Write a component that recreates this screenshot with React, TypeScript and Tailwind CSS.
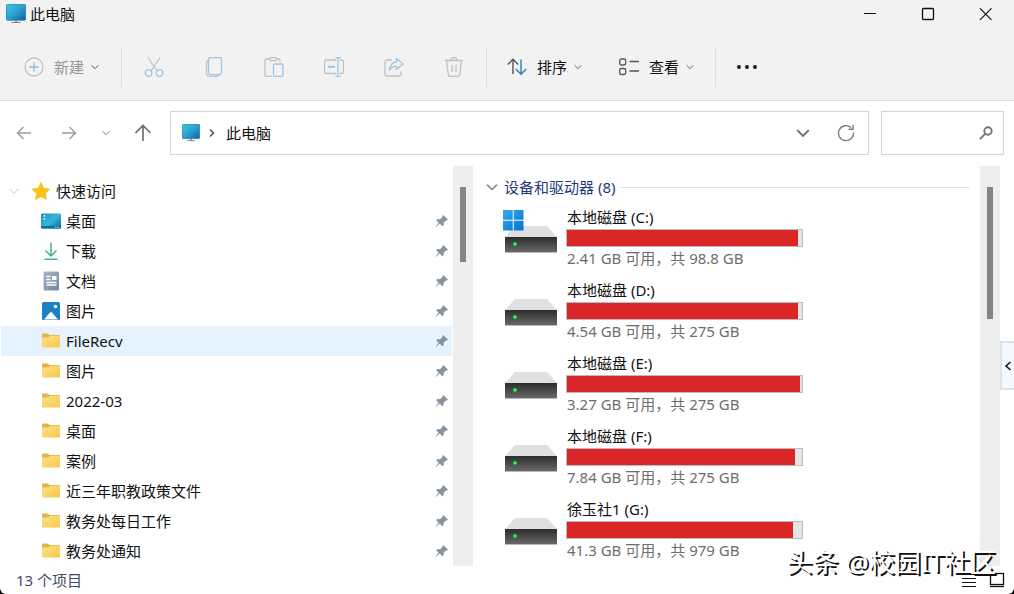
import { useState } from "react";
import type { ReactNode } from "react";

// ─────────────────────────────────────────────────────────────────────────────
// Explorateur de fichiers — fenêtre « 此电脑 »
// ─────────────────────────────────────────────────────────────────────────────

type IconKind = "desktop" | "download" | "document" | "picture" | "folder";

interface QuickItem {
  id:   string;
  nom:  string;
  icon: IconKind;
}

interface Drive {
  nom:     string;
  info:    string;
  used:    number;
  systeme?: boolean;
}

const QUICK_ITEMS: QuickItem[] = [
  { id: "desktop",   nom: "桌面",               icon: "desktop" },
  { id: "downloads", nom: "下载",               icon: "download" },
  { id: "documents", nom: "文档",               icon: "document" },
  { id: "pictures",  nom: "图片",               icon: "picture" },
  { id: "filerecv",  nom: "FileRecv",           icon: "folder" },
  { id: "images",    nom: "图片",               icon: "folder" },
  { id: "2022-03",   nom: "2022-03",            icon: "folder" },
  { id: "bureau",    nom: "桌面",               icon: "folder" },
  { id: "cases",     nom: "案例",               icon: "folder" },
  { id: "policy",    nom: "近三年职教政策文件", icon: "folder" },
  { id: "daily",     nom: "教务处每日工作",     icon: "folder" },
  { id: "notices",   nom: "教务处通知",         icon: "folder" },
];

const DRIVES: Drive[] = [
  { nom: "本地磁盘 (C:)", info: "2.41 GB 可用，共 98.8 GB", used: 98.5, systeme: true },
  { nom: "本地磁盘 (D:)", info: "4.54 GB 可用，共 275 GB",  used: 98.5 },
  { nom: "本地磁盘 (E:)", info: "3.27 GB 可用，共 275 GB",  used: 99.2 },
  { nom: "本地磁盘 (F:)", info: "7.84 GB 可用，共 275 GB",  used: 97.1 },
  { nom: "徐玉社1 (G:)",  info: "41.3 GB 可用，共 979 GB",  used: 96.2 },
];

/* ── Icônes ──────────────────────────────────────────────────────────────── */

function Monitor({ className }: { className: string }) {
  return (
    <svg viewBox="0 0 20 20" className={className} aria-hidden="true">
      <defs>
        <linearGradient id="screen" x1="0" y1="0" x2="1" y2="1">
          <stop offset="0" stopColor="#35d0e4" />
          <stop offset="0.5" stopColor="#2a9fcf" />
          <stop offset="1" stopColor="#14619f" />
        </linearGradient>
      </defs>
      <path d="M9 16h2v3H9z" fill="#8f9aa3" />
      <path d="M5.500 18.500h9" stroke="#7d868c" strokeWidth="1" />
      <rect x="0.400" y="0.400" width="19.200" height="15.800" rx="1" fill="url(#screen)" stroke="#1f78a6" strokeWidth="0.800" />
    </svg>
  );
}

function Chevron({ className }: { className: string }) {
  return (
    <svg viewBox="0 0 8 8" className={className} fill="none" stroke="currentColor" aria-hidden="true">
      <path d="M0.700 2.400 4 5.700l3.300-3.300" />
    </svg>
  );
}

function ToolIcon({ children }: { children: ReactNode }) {
  return (
    <svg viewBox="0 0 20 20" className="size-5" fill="none" stroke="#bfc2c5" strokeWidth="1.300" strokeLinejoin="round" aria-hidden="true">
      {children}
    </svg>
  );
}

function ItemIcon({ kind }: { kind: IconKind }) {
  if (kind === "desktop") {
    return (
      <svg viewBox="0 0 20 20" className="size-5" aria-hidden="true">
        <defs>
          <linearGradient id="desk" x1="0" y1="0" x2="1" y2="1">
            <stop offset="0" stopColor="#1b8fc0" />
            <stop offset="0.5" stopColor="#35b5dc" />
            <stop offset="1" stopColor="#0e6699" />
          </linearGradient>
        </defs>
        <rect x="0" y="2.500" width="20" height="15" rx="1" fill="url(#desk)" />
        <path d="M2.500 4h1.800v1.800H2.500zM2.500 7h1.800v1.800H2.500z" fill="#c8f0fb" />
        <path d="M0 15h20v1.500a1 1 0 0 1-1 1H1a1 1 0 0 1-1-1z" fill="#0d6da2" />
        <path d="M14 16.200h1.500m1 0h1.500" stroke="#9fdcf0" />
      </svg>
    );
  }
  if (kind === "download") {
    return (
      <svg viewBox="0 0 20 20" className="size-5" fill="none" stroke="#42b392" strokeWidth="1.500" aria-hidden="true">
        <path d="M10 1.500v13M4.500 9.500 10 15l5.500-5.500M3.500 18.300h13" />
      </svg>
    );
  }
  if (kind === "document") {
    return (
      <svg viewBox="0 0 20 20" className="size-5" aria-hidden="true">
        <defs>
          <linearGradient id="doc" x1="0" y1="0" x2="1" y2="1">
            <stop offset="0" stopColor="#a7b6ca" />
            <stop offset="1" stopColor="#72859f" />
          </linearGradient>
        </defs>
        <rect x="2.500" y="0.500" width="15.500" height="19" rx="1.500" fill="url(#doc)" />
        <path d="M5.500 5.500h4M5.500 8.500h4M5.500 11.500h10M5.500 14h10" stroke="#fff" strokeWidth="1.300" />
        <path d="M11 5h4.500v4H11z" fill="#fff" />
      </svg>
    );
  }
  if (kind === "picture") {
    return (
      <svg viewBox="0 0 20 20" className="size-5" aria-hidden="true">
        <rect x="1" y="1" width="18" height="18" rx="1.500" fill="#1e80c4" />
        <path d="M3 18.500 9 11.500q1-1 2 0l6 7z" fill="#fff" />
        <circle cx="14.500" cy="5.500" r="1.700" fill="#fff" />
      </svg>
    );
  }
  return (
    <svg viewBox="0 0 20 20" className="size-5" aria-hidden="true">
      <defs>
        <linearGradient id="folder" x1="0" y1="0" x2="1" y2="1">
          <stop offset="0" stopColor="#fde28c" />
          <stop offset="1" stopColor="#f7c74b" />
        </linearGradient>
      </defs>
      <path d="M1 3.500a1 1 0 0 1 1-1h5l1.500 1.500H18a1 1 0 0 1 1 1V8H1z" fill="#e3b548" />
      <path d="M1 6.500h6.500L9.500 4.700H18a1 1 0 0 1 1 1v9.800a1 1 0 0 1-1 1H2a1 1 0 0 1-1-1z" fill="url(#folder)" />
    </svg>
  );
}

function Pin() {
  return (
    <svg viewBox="0 0 14 14" className="size-3.5" aria-hidden="true">
      <path d="M8.300 1 13 5.700l-1.100.9-.8-.2-2.500 2.300.1 2.500-1.400 1L4.700 9.500 1 12.700l-.4-.3 3-3.700L1.200 6.200l1.200-1.100 2.700.1 2.500-2.400-.2-.9z" fill="#89939d" />
    </svg>
  );
}

function DriveIcon({ systeme }: { systeme?: boolean }) {
  return (
    <svg viewBox="0 0 54 46" className="mt-px h-[46px] w-[54px] shrink-0" aria-hidden="true">
      <defs>
        <linearGradient id="front" x1="0" y1="0" x2="0" y2="1">
          <stop offset="0" stopColor="#2c2c2c" />
          <stop offset="1" stopColor="#686868" />
        </linearGradient>
        <linearGradient id="win" x1="0" y1="0" x2="1" y2="1">
          <stop offset="0" stopColor="#35a9ec" />
          <stop offset="1" stopColor="#0873cc" />
        </linearGradient>
      </defs>
      <path d="M12 18h32l10 11H2z" fill="#dfe0e2" />
      <rect x="2" y="29" width="52" height="15" fill="url(#front)" />
      <path d="M2 44.500h52" stroke="#b9b9b9" />
      <circle cx="12" cy="36" r="2.500" fill="#1f8a2c" />
      <circle cx="12" cy="36" r="1.500" fill="#4dfa5c" />
      {systeme && (
        <path d="M0 2h9.700v9.700H0zM10.700 2h9.800v9.700h-9.800zM0 12.700h9.700v9.800H0zM10.700 12.700h9.800v9.800h-9.800z" fill="url(#win)" />
      )}
    </svg>
  );
}

/* ── Barre de titre ──────────────────────────────────────────────────────── */

function TitleBar() {
  return (
    <div className="flex h-7 items-center justify-between pr-[21px] pl-1.5">
      <div className="flex items-center gap-1">
        <Monitor className="size-5" />
        <h1>此电脑</h1>
      </div>
      <div className="flex gap-11">
        <button type="button" aria-label="最小化">
          <svg viewBox="0 0 14 14" className="size-3.5" stroke="#111" aria-hidden="true">
            <path d="M1 6.500h12" />
          </svg>
        </button>
        <button type="button" aria-label="最大化">
          <svg viewBox="0 0 14 14" className="size-3.5" fill="none" stroke="#111" strokeWidth="1.300" aria-hidden="true">
            <rect x="1.500" y="1.500" width="11" height="11" rx="1" />
          </svg>
        </button>
        <button type="button" aria-label="关闭">
          <svg viewBox="0 0 14 14" className="size-3.5" stroke="#111" strokeWidth="1.200" aria-hidden="true">
            <path d="m1 1.300 11.500 11.500M12.500 1.300 1 12.800" />
          </svg>
        </button>
      </div>
    </div>
  );
}

/* ── Barre de commandes ──────────────────────────────────────────────────── */

function Separator() {
  return <div className="h-10 w-px bg-[#dedede]" />;
}

function Toolbar() {
  return (
    <div className="flex h-[73px] items-center border-b border-[#dcdcdc] pt-1.5 pl-6">
      <button type="button" className="flex items-center gap-2.5 pr-[21px] text-[#979797]">
        <ToolIcon>
          <circle cx="10" cy="10" r="9" />
          <path d="M10 5.500v9M5.500 10h9" stroke="#8fb9dc" />
        </ToolIcon>
        <span>新建</span>
        <Chevron className="-ml-1 size-2.5 p-px text-[#555]" />
      </button>
      <Separator />
      <div className="flex gap-10 px-[22px]">
        <button type="button" aria-label="剪切">
          <ToolIcon>
            <path d="M4 0.500 13 14M16 0.500 7 14" />
            <circle cx="4.500" cy="16" r="3.300" stroke="#9cc6e6" />
            <circle cx="15.500" cy="16" r="3.300" stroke="#9cc6e6" />
          </ToolIcon>
        </button>
        <button type="button" aria-label="复制">
          <ToolIcon>
            <path d="M4.500 3.500q-2 .5-2 2.500v10q0 3.500 3.500 3.500h6q2 0 2.500-1.800" />
            <rect x="4.500" y="0.600" width="13" height="17" rx="1.800" stroke="#9cc6e6" />
          </ToolIcon>
        </button>
        <button type="button" aria-label="粘贴">
          <ToolIcon>
            <path d="M6 2H2.500Q1 2 1 3.500v14.500q0 1.500 1.500 1.500H8M12 2h2.500Q16 2 16 3.500V5" />
            <rect x="5.500" y="0.600" width="7" height="3" rx="1.300" />
            <rect x="9.500" y="7" width="9.500" height="12.500" rx="1.200" stroke="#9cc6e6" />
          </ToolIcon>
        </button>
        <button type="button" aria-label="重命名">
          <ToolIcon>
            <path d="M12 3H2.500Q.6 3 .6 5v9.500q0 2 1.900 2H12M16 3h1.500q2 0 2 2v9.500q0 2-2 2H16" />
            <path d="M4 9.800h7" stroke="#9cc6e6" strokeWidth="2" />
            <path d="M14 .6v18.800M11.500.6h5M11.500 19.400h5" stroke="#9cc6e6" />
          </ToolIcon>
        </button>
        <button type="button" aria-label="共享">
          <ToolIcon>
            <path d="M8 3H3Q1 3 1 5v12q0 2 2 2h12q2 0 2-2v-2.500" />
            <path d="M12.500 1.500 19 7l-6.500 5.500V9.500Q8 9 5.500 13.500 6 5.500 12.500 4.800z" stroke="#9cc6e6" />
          </ToolIcon>
        </button>
        <button type="button" aria-label="删除">
          <ToolIcon>
            <path d="M1 3.500h18M7 3.500Q7 .6 10 .6t3 2.900M2.500 3.500l1.700 14q.3 2 2 2h7.600q1.700 0 2-2l1.700-14M8 8v7M12 8v7" />
          </ToolIcon>
        </button>
      </div>
      <Separator />
      <button type="button" className="flex items-center gap-2.5 pr-9 pl-5">
        <svg viewBox="0 0 20 20" className="size-5" fill="none" strokeWidth="1.400" aria-hidden="true">
          <path d="M6 17V2.500M.8 7.500 6 2.300l5.200 5.200" stroke="#555" />
          <path d="M14 2.500V17M8.800 12l5.200 5.200 5.200-5.200" stroke="#2b7eb8" />
        </svg>
        <span>排序</span>
        <Chevron className="-ml-1 size-2.5 p-px text-[#666]" />
      </button>
      <button type="button" className="flex items-center gap-2.5 pr-5">
        <svg viewBox="0 0 20 20" className="size-5" fill="none" stroke="#555" strokeWidth="1.300" aria-hidden="true">
          <rect x=".7" y="2" width="6" height="6" rx="1.800" />
          <rect x=".7" y="11.500" width="6" height="6" rx="1.800" />
          <path d="M10.500 4.500H20M10.500 14H20" />
        </svg>
        <span>查看</span>
        <Chevron className="-ml-1 size-2.5 p-px text-[#666]" />
      </button>
      <Separator />
      <button type="button" aria-label="更多" className="ml-5">
        <svg viewBox="0 0 22 6" className="h-1.5 w-[22px]" fill="#111" aria-hidden="true">
          <circle cx="3" cy="3" r="1.900" />
          <circle cx="11" cy="3" r="1.900" />
          <circle cx="19" cy="3" r="1.900" />
        </svg>
      </button>
    </div>
  );
}

/* ── Navigation et adresse ───────────────────────────────────────────────── */

function AddressRow() {
  const [search, setSearch] = useState("");

  return (
    <div className="flex items-center gap-3 px-2.5 pt-2.5 pb-[11px]">
      <div className="flex w-[148px] shrink-0 items-center justify-between pr-1.5 pl-1.5">
        <button type="button" aria-label="后退">
          <svg viewBox="0 0 16 16" className="size-4" fill="none" stroke="#9a9a9a" strokeWidth="1.300" aria-hidden="true">
            <path d="M15 8H1.500M7.500 2 1.500 8l6 6" />
          </svg>
        </button>
        <button type="button" aria-label="前进" className="ml-1.5">
          <svg viewBox="0 0 16 16" className="size-4" fill="none" stroke="#9a9a9a" strokeWidth="1.300" aria-hidden="true">
            <path d="M1 8h13.500M8.500 2l6 6-6 6" />
          </svg>
        </button>
        <button type="button" aria-label="最近浏览的位置">
          <Chevron className="size-2.5 p-px text-[#777]" />
        </button>
        <button type="button" aria-label="上移">
          <svg viewBox="0 0 18 18" className="size-[18px]" fill="none" stroke="#6a6a6a" strokeWidth="1.600" aria-hidden="true">
            <path d="M9 17V1.500M1.500 9 9 1.500 16.500 9" />
          </svg>
        </button>
      </div>
      <div className="flex h-11 flex-1 items-center border border-[#d4d4d4] pr-[13px] pl-[11px]">
        <Monitor className="size-[18px]" />
        <svg viewBox="0 0 8 10" className="mr-2.5 ml-2 h-2.5 w-2" fill="none" stroke="#555" strokeWidth="1.600" aria-hidden="true">
          <path d="m2 1.500 3.500 3.500L2 8.500" />
        </svg>
        <button type="button">此电脑</button>
        <button type="button" aria-label="展开" className="mr-[27px] ml-auto">
          <Chevron className="size-3.5 text-[#6b6b6b]" />
        </button>
        <button type="button" aria-label="刷新">
          <svg viewBox="0 0 18 18" className="size-[18px]" fill="none" stroke="#7b7b7b" strokeWidth="1.400" aria-hidden="true">
            <path d="M16.500 8.500A7.500 7.500 0 1 1 14 3.500M16 .8v4.400h-4.500" />
          </svg>
        </button>
      </div>
      <label className="flex h-11 w-[123px] items-center border border-[#d4d4d4] pr-2.5">
        <input
          type="search"
          aria-label="搜索"
          value={search}
          onChange={(e) => setSearch(e.target.value)}
          className="w-full min-w-0 flex-1 pl-2 outline-none"
        />
        <svg viewBox="0 0 14 14" className="size-3.5 shrink-0" fill="none" stroke="#737373" strokeWidth="1.900" aria-hidden="true">
          <circle cx="9" cy="5" r="3.700" />
          <path d="M6.200 7.800.8 13.200" />
        </svg>
      </label>
    </div>
  );
}

/* ── Volet gauche ────────────────────────────────────────────────────────── */

function Sidebar() {
  const [selected, setSelected] = useState("filerecv");

  return (
    <nav className="w-[453px] shrink-0 px-px pt-2.5">
      <button type="button" className="flex h-[30px] items-center pl-2">
        <Chevron className="mr-3 size-2.5 text-[#dcdcdc]" />
        <svg viewBox="0 0 20 20" className="mr-[5px] size-5" fill="#fcc419" stroke="#f5b50a" strokeWidth="0.700" aria-hidden="true">
          <path d="m10 1.500 2.700 5.800 6.100.8-4.500 4.300 1.200 6.100-5.500-3-5.500 3 1.200-6.100L1.200 8.100l6.100-.8z" />
        </svg>
        <span>快速访问</span>
      </button>
      <ul>
        {QUICK_ITEMS.map((item) => (
          <li key={item.id}>
            <button
              type="button"
              onClick={() => setSelected(item.id)}
              className={`flex h-[30px] w-full items-center gap-1 pr-[3px] pl-10 text-left ${
                item.id === selected ? "bg-[#e5f3fe]" : ""
              }`}
            >
              <ItemIcon kind={item.icon} />
              <span className="flex-1 pl-px">{item.nom}</span>
              <Pin />
            </button>
          </li>
        ))}
      </ul>
    </nav>
  );
}

/* ── Volet principal ─────────────────────────────────────────────────────── */

function DriveList() {
  return (
    <section className="min-w-0 flex-1 pt-[11px] pr-2.5 pl-[13px]">
      <div className="flex items-center gap-1.5">
        <button type="button" className="flex items-center gap-1.5 text-[#1e3a7b]">
          <Chevron className="size-3 text-[#888]" />
          <h2>设备和驱动器 (8)</h2>
        </button>
        <div className="h-px flex-1 bg-[#e2e2e2]" />
      </div>
      <ul className="mt-2.5 space-y-3 pl-[17px]">
        {DRIVES.map((d) => (
          <li key={d.nom} className="flex gap-[9px]">
            <DriveIcon systeme={d.systeme} />
            <div className="w-[237px]">
              <p className="pl-px">{d.nom}</p>
              <div
                role="progressbar"
                aria-label={d.nom}
                aria-valuenow={d.used}
                className="mt-0.5 mb-px h-[18px] border border-[#bcbcbc] bg-[#e6e6e6]"
              >
                <div className="h-full bg-[#da2626]" style={{ width: `${d.used}%` }} />
              </div>
              <p className="pl-px text-[#6d6d6d]">{d.info}</p>
            </div>
          </li>
        ))}
      </ul>
    </section>
  );
}

export default function App() {
  return (
    <div className="bg-black">
      <div className="relative flex min-h-screen flex-col rounded-b-md bg-white font-['Noto_Sans','Noto_Sans_CJK_SC',sans-serif] text-[15px] leading-5 text-[#111]">
        <header className="bg-[#f2f2f2]">
          <TitleBar />
          <Toolbar />
        </header>
        <AddressRow />
        <main className="flex flex-1">
          <Sidebar />
          <div className="w-5 shrink-0 bg-[#eeeeee] pt-[21px]">
            <div className="mx-auto h-[75px] w-1.5 bg-[#858585]" />
          </div>
          <DriveList />
          <div className="w-5 shrink-0 bg-[#eeeeee] pt-[21px]">
            <div className="mx-auto h-[132px] w-1.5 bg-[#858585]" />
          </div>
          <div className="w-3.5 shrink-0 pt-[175px]">
            <button type="button" aria-label="展开侧栏" className="flex h-[49px] w-full items-center justify-center border-2 border-r-0 border-[#dce3ee] bg-[#f4f9ff]">
              <svg viewBox="0 0 8 10" className="h-2.5 w-2" fill="none" stroke="#111" strokeWidth="1.600" aria-hidden="true">
                <path d="M6.500 1 2 5l4.500 4" />
              </svg>
            </button>
          </div>
        </main>
        <footer className="flex h-7 items-center justify-between pr-[9px] pl-4">
          <span className="text-[#3d4c66]">13 个项目</span>
          <div className="flex gap-3">
            <button type="button" aria-label="详细信息">
              <svg viewBox="0 0 16 16" className="size-4" stroke="#111" aria-hidden="true">
                <path d="M1 2.500h14M1 6.500h14M1 10.500h14M1 14.500h14" />
              </svg>
            </button>
            <button type="button" aria-label="大图标">
              <svg viewBox="0 0 16 16" className="size-4" fill="none" stroke="#111" strokeWidth="1.300" aria-hidden="true">
                <rect x="1.500" y="1.500" width="13" height="11" />
                <path d="M1 14.500h14" />
              </svg>
            </button>
          </div>
        </footer>
        {/* Signature posée par-dessus la fenêtre */}
        <p className="pointer-events-none absolute right-[18px] bottom-4 text-[26px] leading-8 text-white [text-shadow:2px_2px_0_#111]">
          头条 @校园IT社区
        </p>
      </div>
    </div>
  );
}
